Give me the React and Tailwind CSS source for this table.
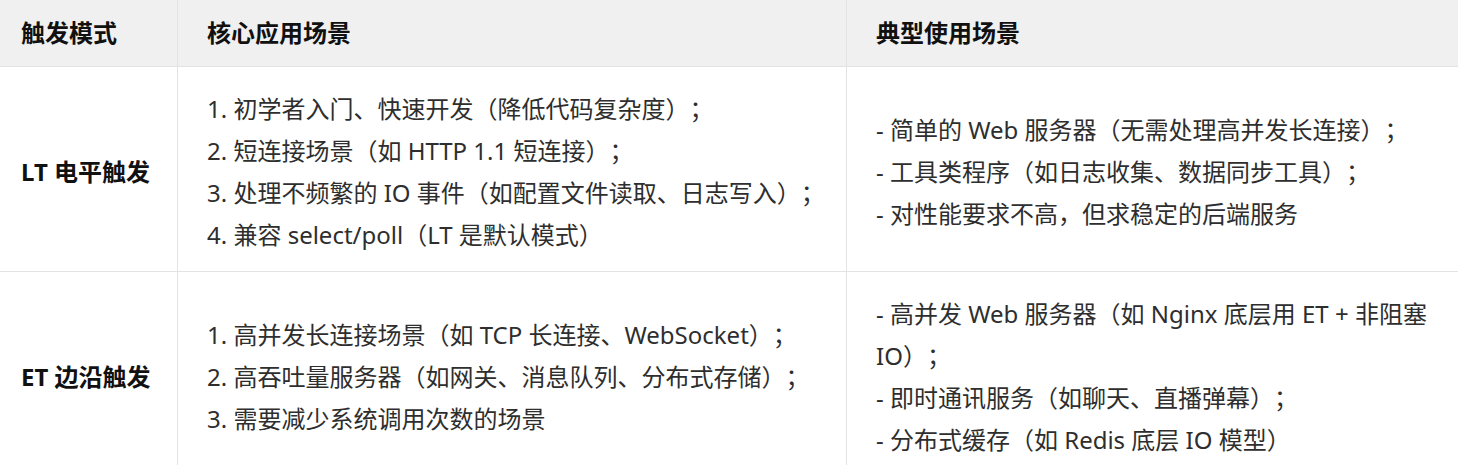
// Trigger-mode comparison table (LT vs ET)

const rows = [
  {
    mode: 'LT 电平触发',
    core: [
      '1. 初学者入门、快速开发（降低代码复杂度）；',
      '2. 短连接场景（如 HTTP 1.1 短连接）；',
      '3. 处理不频繁的 IO 事件（如配置文件读取、日志写入）；',
      '4. 兼容 select/poll（LT 是默认模式）',
    ],
    usage: [
      '- 简单的 Web 服务器（无需处理高并发长连接）；',
      '- 工具类程序（如日志收集、数据同步工具）；',
      '- 对性能要求不高，但求稳定的后端服务',
    ],
  },
  {
    mode: 'ET 边沿触发',
    core: [
      '1. 高并发长连接场景（如 TCP 长连接、WebSocket）；',
      '2. 高吞吐量服务器（如网关、消息队列、分布式存储）；',
      '3. 需要减少系统调用次数的场景',
    ],
    usage: [
      '- 高并发 Web 服务器（如 Nginx 底层用 ET + 非阻塞 IO）；',
      '- 即时通讯服务（如聊天、直播弹幕）；',
      '- 分布式缓存（如 Redis 底层 IO 模型）',
    ],
  },
];

export default function App() {
  return (
    <div className="w-[1458px] h-[465px] overflow-hidden bg-white font-['Noto_Sans','Noto_Sans_CJK_SC',sans-serif] text-[24px] leading-[42px] text-[#2e2e2e] [text-spacing-trim:space-all]">
      <div className="grid w-[1507px] grid-cols-[178px_669px_660px]">
        {/* header */}
        <div className="h-[67px] flex items-center pl-[21px] bg-[#f0f0f0] border-b border-r border-[#e3e3e3] font-bold text-[#111]">
          触发模式
        </div>
        <div className="h-[67px] flex items-center pl-[29px] bg-[#f0f0f0] border-b border-r border-[#e3e3e3] font-bold text-[#111]">
          核心应用场景
        </div>
        <div className="h-[67px] flex items-center pl-[29px] bg-[#f0f0f0] border-b border-[#e3e3e3] font-bold text-[#111]">
          典型使用场景
        </div>

        {rows.map((row, i) => (
          <div key={row.mode} className="contents">
            <div className={`flex items-center pl-[21px] pt-[6px] border-r border-[#e3e3e3] font-bold text-[#111] ${i === 0 ? 'border-b' : ''}`}>
              {row.mode}
            </div>
            <div className={`flex flex-col justify-center pl-[29px] pr-4 pt-[21px] pb-[15px] border-r border-[#e3e3e3] ${i === 0 ? 'border-b' : ''}`}>
              {row.core.map((line) => (
                <p key={line}>{line}</p>
              ))}
            </div>
            <div className={`flex flex-col justify-center px-[29px] pt-[21px] pb-[15px] border-[#e3e3e3] ${i === 0 ? 'border-b' : ''}`}>
              {row.usage.map((line) => (
                <p key={line}>{line}</p>
              ))}
            </div>
          </div>
        ))}
      </div>
    </div>
  );
}
